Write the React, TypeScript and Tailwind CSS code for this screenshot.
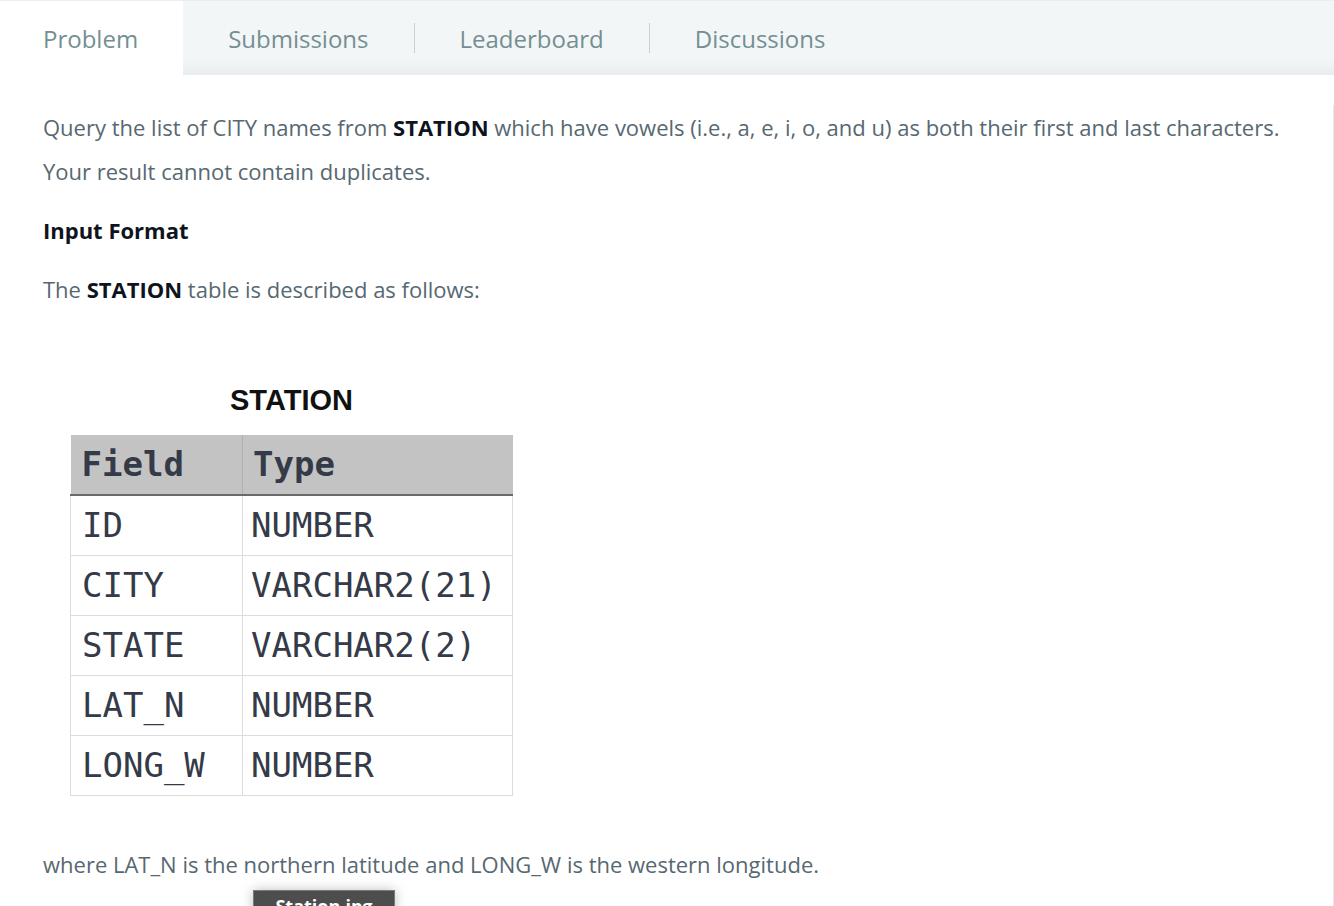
import React from 'react';

const rows: [string, string][] = [
  ['ID', 'NUMBER'],
  ['CITY', 'VARCHAR2(21)'],
  ['STATE', 'VARCHAR2(2)'],
  ['LAT_N', 'NUMBER'],
  ['LONG_W', 'NUMBER'],
];

const App: React.FC = () => {
  return (
    <div className="w-[1334px] h-[906px] overflow-hidden bg-white font-['Open_Sans',sans-serif]">
      {/* Tabs */}
      <div className="flex h-[75px] border-t border-[#e9eef0] bg-gradient-to-b from-[#f3f6f7] from-80% to-[#e8edef]">
        <div className="flex items-center h-full pl-[43px] pr-[45px] pt-[2px] bg-white text-[24px] text-[#738f93]">Problem</div>
        {['Submissions', 'Leaderboard', 'Discussions'].map((t, i) => (
          <div key={t} className="flex items-center h-full">
            <span className="px-[45px] pt-[2px] text-[24px] text-[#738f93]">{t}</span>
            {i < 2 && <span className="w-px h-[30px] bg-[#c6d2d5]" />}
          </div>
        ))}
      </div>

      {/* Content */}
      <div className="h-[831px] border-r border-[#e3e8ea] pl-[43px] pr-[40px] text-[22px] text-[#576871]">
        <p className="mt-[30px] leading-[44px]">
          Query the list of CITY names from <b className="text-[#0e141e]">STATION</b> which have vowels (i.e., a, e, i, o, and u) as both their first and last characters. Your result cannot contain duplicates.
        </p>
        <p className="mt-[15px] leading-[44px] font-bold text-[#0e141e]">Input Format</p>
        <p className="mt-[15px] leading-[44px]">
          The <b className="text-[#0e141e]">STATION</b> table is described as follows:
        </p>

        {/* Table picture */}
        <div className="ml-[27px] mt-[72px] w-[443px]">
          <div className="text-center font-['Liberation_Sans',sans-serif] font-bold text-[29px] leading-[34px] text-[#111]">STATION</div>
          <table className="mt-[18px] w-[443px] border-collapse font-['DejaVu_Sans_Mono',monospace] text-[34px] text-[#343a48]">
            <thead>
              <tr className="h-[60px] bg-[#c3c3c3]">
                <th className="w-[172px] pl-[11px] text-left border-r border-[#b0b0b0] border-b-2 border-b-[#6a6a6a]">Field</th>
                <th className="pl-[10px] text-left border-b-2 border-b-[#6a6a6a]">Type</th>
              </tr>
            </thead>
            <tbody>
              {rows.map(([f, t]) => (
                <tr key={f} className="h-[60px]">
                  <td className="pl-[11px] border border-[#dcdcdc]">{f}</td>
                  <td className="pl-[8px] border border-[#dcdcdc]">{t}</td>
                </tr>
              ))}
            </tbody>
          </table>
        </div>

        <p className="mt-[46px] leading-[44px]">
          where LAT_N is the northern latitude and LONG_W is the western longitude.
        </p>
        <div className="ml-[210px] mt-[4px] w-[142px] h-[30px] bg-[#4d4d4d] border border-[#7a7a7a] shadow-[0_0_12px_rgba(0,0,0,0.25)] text-white text-[18px] font-bold leading-[30px] text-center">
          Station.jpg
        </div>
      </div>
    </div>
  );
};

export default App;
